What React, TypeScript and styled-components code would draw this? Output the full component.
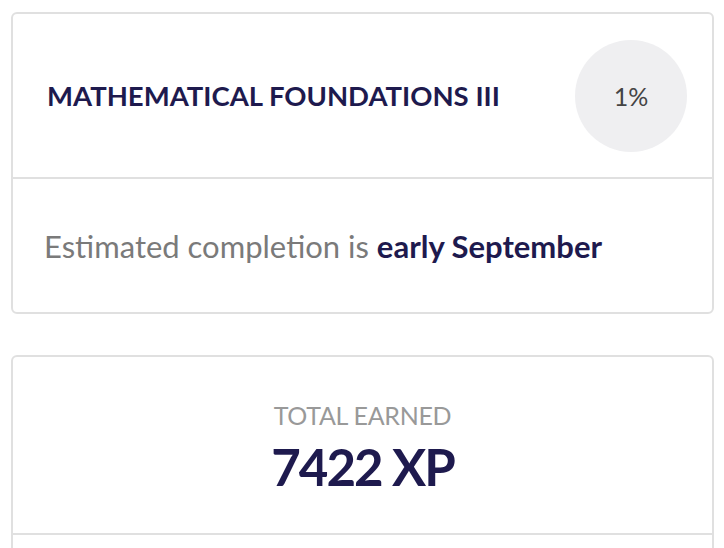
import React from 'react';
import styled, { createGlobalStyle } from 'styled-components';

const GlobalStyle = createGlobalStyle`
  body {
    margin: 0;
    background: #ffffff;
    font-family: Lato, "Open Sans", sans-serif;
  }
`;

const Page = styled.div`
  display: flex;
  flex-direction: column;
  gap: 41px;
  padding: 12px 10px 0 11px;
`;

const Card = styled.div`
  border: 2px solid #e0e0e0;
  border-radius: 6px;
  background: #fff;
`;

const CourseHeader = styled.div`
  display: flex;
  align-items: center;
  justify-content: space-between;
  height: 163px;
  padding: 0 25px 0 34px;
  border-bottom: 2px solid #e0e0e0;
`;

const CourseTitle = styled.h2`
  margin: 0;
  font-size: 27.5px;
  font-weight: 700;
  color: #1e1a4e;
  letter-spacing: 0;
`;

const Progress = styled.div`
  width: 112px;
  height: 112px;
  border-radius: 50%;
  background: #efeff1;
  display: flex;
  align-items: center;
  justify-content: center;
  font-size: 25px;
  color: #444;
`;

const Estimate = styled.div`
  display: flex;
  align-items: center;
  height: 133px;
  padding: 0 0 0 31px;
  font-size: 31px;
  color: #7a7a7a;

  strong {
    color: #1e1a4e;
    font-weight: 700;
  }
`;

const Stats = styled.div`
  display: flex;
  flex-direction: column;
  align-items: center;
  justify-content: center;
  gap: 10px;
  height: 178px;
  border-bottom: 2px solid #e0e0e0;
  padding-top: 4px;
  box-sizing: border-box;
`;

const StatLabel = styled.div`
  font-size: 25px;
  line-height: 30px;
  color: #999;
  text-transform: uppercase;
  letter-spacing: -0.3px;
`;

const StatValue = styled.div`
  font-size: 51px;
  line-height: 54px;
  font-weight: 700;
  color: #1e1a4e;
  letter-spacing: -2px;
`;

const Filler = styled.div`
  height: 40px;
`;

export default function App() {
  return (
    <>
      <GlobalStyle />
      <Page>
        <Card>
          <CourseHeader>
            <CourseTitle>MATHEMATICAL FOUNDATIONS III</CourseTitle>
            <Progress>1%</Progress>
          </CourseHeader>
          <Estimate>
            <span>
              Estimated completion is <strong>early September</strong>
            </span>
          </Estimate>
        </Card>
        <Card>
          <Stats>
            <StatLabel>Total earned</StatLabel>
            <StatValue>7422 XP</StatValue>
          </Stats>
          <Filler />
        </Card>
      </Page>
    </>
  );
}
